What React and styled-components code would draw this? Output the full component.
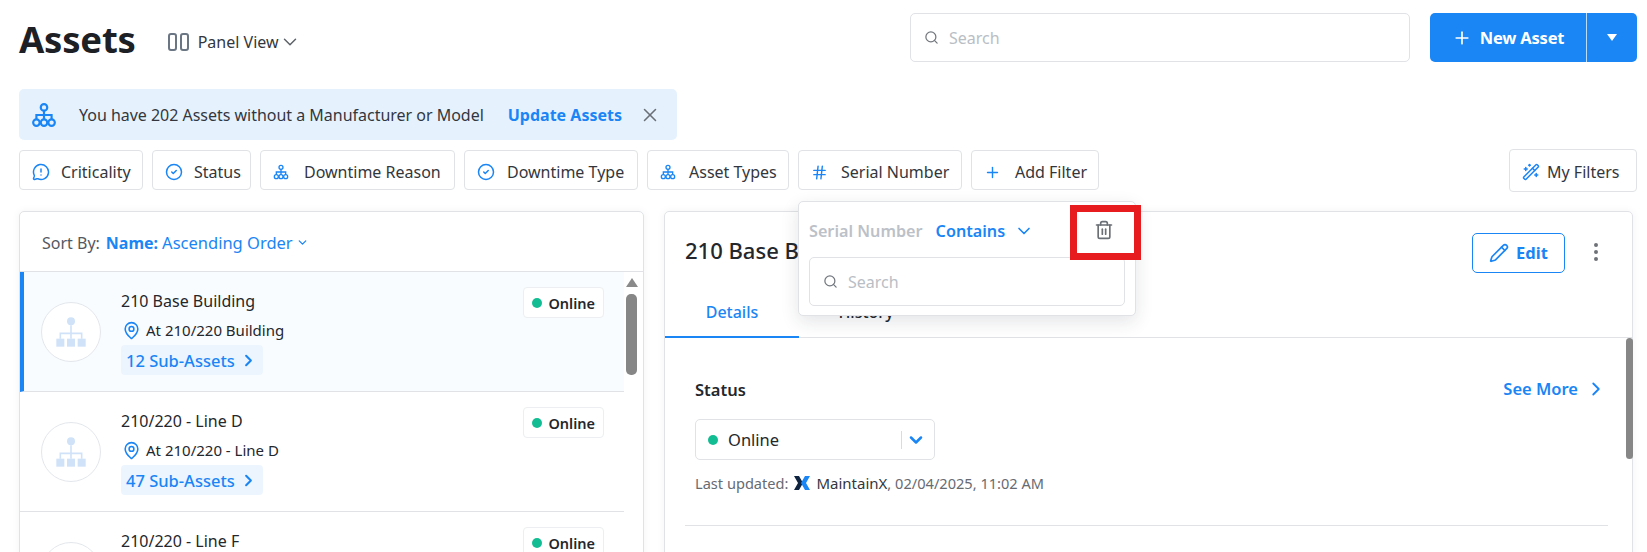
import * as React from 'react';
import styled, { createGlobalStyle } from 'styled-components';
import {
  ChevronDown,
  ChevronRight,
  Hash,
  MapPin,
  MessageCircleWarning,
  MoreVertical,
  Pencil,
  Plus,
  Search,
  Trash2,
  WandSparkles,
  X,
  CircleCheck,
} from 'lucide-react';

const BLUE = '#1a85f5';
const TEXT = '#24272c';
const LINE = '#e0e2e5';

const GlobalStyle = createGlobalStyle`
  html, body {
    margin: 0;
    background: #fff;
    overflow: hidden;
  }
  body {
    font-family: "Noto Sans", "Open Sans", "Liberation Sans", sans-serif;
    color: ${TEXT};
  }
  * { box-sizing: border-box; }
`;

const Page = styled.div`
  position: relative;
  height: 552px;
  overflow: hidden;
  padding: 13px 10px 0 19px;
`;

const Header = styled.header`
  display: flex;
  align-items: center;
  height: 49px;
`;

const Title = styled.h1`
  margin: 3px 0 0;
  font-size: 36.5px;
  font-weight: 700;
  line-height: 49px;
  letter-spacing: -0.2px;
  color: #1d2025;
`;

const ViewSwitch = styled.div`
  display: flex;
  align-items: center;
  margin: 8px 0 0 32px;
  font-size: 16px;
  color: #33373d;
  svg:first-child { margin-right: 8px; }
`;

const TopSearch = styled.div`
  display: flex;
  align-items: center;
  gap: 10px;
  width: 500px;
  height: 49px;
  margin-left: auto;
  padding-left: 13px;
  border: 1px solid ${LINE};
  border-radius: 5px;
  font-size: 16px;
  color: #b9bec5;
  svg { color: #72777e; }
`;

const SplitButton = styled.div`
  display: flex;
  width: 207px;
  height: 49px;
  margin-left: 20px;
  border-radius: 5px;
  background: ${BLUE};
  color: #fff;
  font-size: 16.5px;
  font-weight: 700;
  letter-spacing: -0.2px;
`;

const SplitMain = styled.div`
  flex: none;
  width: 157px;
  display: flex;
  align-items: center;
  justify-content: center;
  gap: 8px;
  border-right: 1px solid #bcdcfb;
`;

const SplitCaret = styled.div`
  flex: 1;
  display: flex;
  align-items: center;
  justify-content: center;
  &::after {
    content: '';
    border: 5px solid transparent;
    border-top: 7px solid #fff;
    border-bottom: 0;
  }
`;

const Banner = styled.div`
  display: flex;
  align-items: center;
  width: 658px;
  height: 51px;
  margin-top: 27px;
  padding-left: 12px;
  border-radius: 5px;
  background: #e5f2fe;
  font-size: 16px;
  color: #33373d;
`;

const BannerText = styled.span`
  margin-left: 22px;
  letter-spacing: -0.02px;
`;

const BannerLink = styled.span`
  margin-left: 24px;
  font-weight: 700;
  color: ${BLUE};
`;

const BannerClose = styled.span`
  display: flex;
  margin-left: 17px;
  color: #6b7077;
`;

const FilterRow = styled.div`
  display: flex;
  align-items: center;
  gap: 9px;
  height: 40px;
  margin-top: 10px;
`;

const Chip = styled.div`
  display: flex;
  align-items: center;
  gap: ${(p) => p.$gap || 12}px;
  height: ${(p) => (p.$tall ? 43 : 40)}px;
  width: ${(p) => p.$width}px;
  padding: 4px 0 0 12px;
  margin-left: ${(p) => (p.$push ? 'auto' : '0')};
  border: 1px solid ${LINE};
  border-radius: 4px;
  background: #fff;
  font-size: 16px;
  color: #33373d;
  white-space: nowrap;
  svg { color: ${BLUE}; flex: none; }
`;

const Panels = styled.div`
  display: flex;
  gap: 20px;
  margin-top: 21px;
  margin-right: 4px;
`;

const ListPanel = styled.section`
  width: 625px;
  height: 400px;
  border: 1px solid ${LINE};
  border-radius: 5px 5px 0 0;
  box-shadow: 0 0 8px rgba(30, 40, 60, 0.05);
`;

const SortBar = styled.div`
  display: flex;
  align-items: center;
  height: 60px;
  padding: 2px 0 0 22px;
  border-bottom: 1px solid ${LINE};
  font-size: 16px;
  color: #55595f;
`;

const SortName = styled.b`
  margin-left: 6px;
  color: ${BLUE};
  font-weight: 700;
`;

const SortOrder = styled.span`
  margin-left: 4px;
  color: ${BLUE};
  font-size: 16.5px;
  display: flex;
  align-items: center;
  gap: 3px;
`;

const ListBody = styled.div`
  display: flex;
`;

const Rows = styled.div`
  width: 605px;
`;

const Row = styled.div`
  display: flex;
  height: 120px;
  padding: 21px 20px 0 ${(p) => (p.$active ? 17 : 21)}px;
  border-bottom: 1px solid ${LINE};
  border-left: ${(p) => (p.$active ? `4px solid ${BLUE}` : '0')};
  background: ${(p) => (p.$active ? '#f9fcff' : '#fff')};
`;

const AssetThumb = styled.div`
  flex: none;
  display: flex;
  align-items: center;
  justify-content: center;
  width: 60px;
  height: 60px;
  margin-top: 9px;
  border: 1px solid #e3e7ec;
  border-radius: 50%;
  background: #fff;
`;

const RowInfo = styled.div`
  flex: 1;
  margin-left: 20px;
`;

const AssetName = styled.div`
  font-size: 16px;
  line-height: 22px;
  margin-top: -3px;
`;

const AssetPlace = styled.div`
  display: flex;
  align-items: center;
  gap: 5px;
  margin-top: 8px;
  padding-left: 1px;
  font-size: 15px;
  line-height: 20px;
  svg { color: ${BLUE}; }
`;

const SubAssets = styled.div`
  display: inline-flex;
  align-items: center;
  gap: 4px;
  height: 30px;
  margin-top: 5px;
  padding: 0 5px;
  border-radius: 4px;
  background: #ecf5fe;
  color: ${BLUE};
  font-size: 16.5px;
  font-weight: 500;
`;

const StatusBadge = styled.div`
  display: flex;
  align-items: center;
  gap: 6px;
  height: 31px;
  margin-top: -6px;
  padding: 0 8px;
  border: 1px solid #eceef1;
  border-radius: 4px;
  background: #fff;
  font-size: 14.5px;
  font-weight: 600;
`;

const Dot = styled.span`
  flex: none;
  width: 10px;
  height: 10px;
  border-radius: 50%;
  background: #13bd93;
`;

const ListScroll = styled.div`
  flex: none;
  width: 18px;
  padding-top: 6px;
  margin-left: 1px;
`;

const ScrollUp = styled.div`
  width: 0;
  margin-left: 1px;
  border: 6px solid transparent;
  border-top: 0;
  border-bottom: 9px solid #8a8a8a;
`;

const ScrollThumb = styled.div`
  width: 11px;
  height: 81px;
  margin: 7px 0 0 1px;
  border-radius: 5px;
  background: #868686;
`;

const DetailPanel = styled.section`
  position: relative;
  flex: 1;
  height: 400px;
  border: 1px solid ${LINE};
  border-radius: 5px 5px 0 0;
  box-shadow: 0 0 8px rgba(30, 40, 60, 0.05);
`;

const DetailHead = styled.div`
  display: flex;
  align-items: center;
  height: 80px;
  padding: 0 24px 0 20px;
`;

const DetailTitle = styled.h2`
  margin: -4px auto 0 0;
  font-size: 22px;
  font-weight: 500;
`;

const EditButton = styled.div`
  display: flex;
  align-items: center;
  justify-content: center;
  gap: 7px;
  width: 93px;
  height: 40px;
  border: 1px solid ${BLUE};
  border-radius: 5px;
  color: ${BLUE};
  font-size: 16.5px;
  font-weight: 700;
  margin-top: 1px;
`;

const MoreButton = styled.div`
  display: flex;
  margin-left: 19px;
  color: #6e7278;
`;

const Tabs = styled.div`
  display: flex;
  height: 46px;
  border-bottom: 1px solid ${LINE};
`;

const Tab = styled.div`
  display: flex;
  align-items: center;
  justify-content: center;
  width: 134px;
  height: 46px;
  padding-bottom: 4px;
  font-size: 16px;
  font-weight: 500;
  color: ${(p) => (p.$active ? BLUE : TEXT)};
  border-bottom: 2px solid ${(p) => (p.$active ? BLUE : 'transparent')};
`;

const DetailBody = styled.div`
  position: relative;
  padding: 0 24px 0 20px;
`;

const Section = styled.div`
  height: 188px;
  padding: 36px 0 0 10px;
  border-bottom: 1px solid ${LINE};
`;

const SectionHead = styled.div`
  display: flex;
  align-items: center;
  justify-content: space-between;
  height: 30px;
  padding-right: 1px;
`;

const SectionTitle = styled.div`
  font-size: 16.5px;
  font-weight: 600;
`;

const SeeMore = styled.div`
  display: flex;
  align-items: center;
  gap: 7px;
  margin-top: -1px;
  font-size: 16.5px;
  font-weight: 600;
  color: ${BLUE};
`;

const StatusSelect = styled.div`
  display: flex;
  align-items: center;
  gap: 10px;
  width: 240px;
  height: 41px;
  margin-top: 15px;
  padding-left: 12px;
  border: 1px solid ${LINE};
  border-radius: 5px;
  font-size: 16.5px;
`;

const SelectArrow = styled.div`
  display: flex;
  align-items: center;
  margin-left: auto;
  height: 18px;
  padding: 0 8px 0 4px;
  border-left: 1px solid #d8dbdf;
  color: ${BLUE};
`;

const UpdatedLine = styled.div`
  display: flex;
  align-items: center;
  gap: 6px;
  margin-top: 13px;
  font-size: 14.6px;
  color: #666b72;
`;

const UpdatedBy = styled.span`
  color: #33373d;
  font-size: 15px;
  margin-right: -6px;
`;

const UpdatedLogo = styled.span`
  display: flex;
`;

const DetailScroll = styled.div`
  position: absolute;
  top: 126px;
  right: -1px;
  width: 7px;
  height: 121px;
  border-radius: 4px;
  background: #868686;
`;

const Popover = styled.div`
  position: absolute;
  left: 798px;
  top: 201px;
  width: 338px;
  height: 115px;
  padding: 0 10px;
  border: 1px solid ${LINE};
  border-radius: 5px;
  background: #fff;
  box-shadow: 0 6px 18px rgba(30, 40, 60, 0.12);
`;

const PopoverHead = styled.div`
  display: flex;
  align-items: center;
  height: 55px;
  padding-top: 2px;
  font-size: 16.2px;
  font-weight: 600;
`;

const PopoverLabel = styled.span`
  color: #bcc1c8;
`;

const PopoverMode = styled.span`
  display: flex;
  align-items: center;
  gap: 9px;
  margin-left: 13px;
  color: ${BLUE};
`;

const PopoverTrash = styled.span`
  display: flex;
  margin-left: auto;
  margin-right: 11px;
  margin-top: -2px;
  color: #6b7077;
`;

const PopoverSearch = styled.div`
  display: flex;
  align-items: center;
  gap: 10px;
  width: 316px;
  height: 49px;
  padding-left: 13px;
  border: 1px solid ${LINE};
  border-radius: 5px;
  font-size: 16px;
  color: #b9bec5;
  svg { color: #72777e; }
`;

const Highlight = styled.div`
  position: absolute;
  left: 1070px;
  top: 205px;
  width: 71px;
  height: 55px;
  border: 7px solid #e71c1f;
`;

const HierarchyIcon = ({ size = 24, color = BLUE, solid = false }) => (
  <svg width={size} height={size} viewBox="0 0 24 24" fill="none" stroke={color} strokeWidth="2">
    {solid ? (
      <>
        <circle cx="12" cy="4" r="3" fill={color} stroke="none" />
        <path d="M12 7v6M4 17v-4h16v4M12 13v4" strokeWidth="1.2" />
        <rect x="1" y="17" width="6" height="6" fill={color} stroke="none" />
        <rect x="9" y="17" width="6" height="6" fill={color} stroke="none" />
        <rect x="17" y="17" width="6" height="6" fill={color} stroke="none" />
      </>
    ) : (
      <>
        <circle cx="12" cy="5" r="3" />
        <path d="M12 8v4M5 16v-4h14v4M12 12v4" />
        <circle cx="5" cy="19" r="3" />
        <circle cx="12" cy="19" r="3" />
        <circle cx="19" cy="19" r="3" />
      </>
    )}
  </svg>
);

const PanelIcon = () => (
  <svg width="22" height="18" viewBox="0 0 22 18" fill="none" stroke="#6b7684" strokeWidth="2">
    <rect x="1" y="1" width="7" height="16" rx="2" />
    <rect x="13" y="1" width="7" height="16" rx="2" />
  </svg>
);

const MaintainLogo = () => (
  <svg width="16" height="14" viewBox="0 0 16 14">
    <path d="M0 0h5l4 7-4 7H0l4-7z" fill="#0d2340" />
    <path d="M11 0h5l-4 7 4 7h-5L7 7z" fill="#1a85f5" />
  </svg>
);

const assets = [
  { name: '210 Base Building', place: 'At 210/220 Building', subs: '12 Sub-Assets', active: true },
  { name: '210/220 - Line D', place: 'At 210/220 - Line D', subs: '47 Sub-Assets' },
  { name: '210/220 - Line F' },
];

const filters = [
  { label: 'Criticality', width: 124, gap: 11, icon: <MessageCircleWarning size={18} /> },
  { label: 'Status', width: 99, gap: 11, icon: <CircleCheck size={18} /> },
  { label: 'Downtime Reason', width: 195, gap: 15, icon: <HierarchyIcon size={16} /> },
  { label: 'Downtime Type', width: 174, gap: 12, icon: <CircleCheck size={18} /> },
  { label: 'Asset Types', width: 142, gap: 13, icon: <HierarchyIcon size={16} /> },
  { label: 'Serial Number', width: 164, gap: 13, icon: <Hash size={17} /> },
  { label: 'Add Filter', width: 128, gap: 14, icon: <Plus size={17} /> },
];

export default function App() {
  return (
    <Page>
      <GlobalStyle />
      <Header>
        <Title>Assets</Title>
        <ViewSwitch>
          <PanelIcon />
          Panel View
          <ChevronDown size={22} strokeWidth={1.6} color="#5d6269" />
        </ViewSwitch>
        <TopSearch>
          <Search size={15} />
          Search
        </TopSearch>
        <SplitButton>
          <SplitMain>
            <Plus size={20} />
            New Asset
          </SplitMain>
          <SplitCaret />
        </SplitButton>
      </Header>

      <Banner>
        <HierarchyIcon size={26} />
        <BannerText>You have 202 Assets without a Manufacturer or Model</BannerText>
        <BannerLink>Update Assets</BannerLink>
        <BannerClose>
          <X size={22} strokeWidth={1.7} />
        </BannerClose>
      </Banner>

      <FilterRow>
        {filters.map((f) => (
          <Chip key={f.label} $width={f.width} $gap={f.gap}>
            {f.icon}
            {f.label}
          </Chip>
        ))}
        <Chip $push $tall $width={128} $gap={7}>
          <WandSparkles size={18} />
          My Filters
        </Chip>
      </FilterRow>

      <Panels>
        <ListPanel>
          <SortBar>
            Sort By:
            <SortName>Name:</SortName>
            <SortOrder>
              Ascending Order
              <ChevronDown size={13} strokeWidth={2.4} />
            </SortOrder>
          </SortBar>
          <ListBody>
            <Rows>
              {assets.map((a) => (
                <Row key={a.name} $active={a.active}>
                  <AssetThumb>
                    <HierarchyIcon size={32} color="#cfe2f8" solid />
                  </AssetThumb>
                  <RowInfo>
                    <AssetName>{a.name}</AssetName>
                    {a.place && (
                      <AssetPlace>
                        <MapPin size={19} />
                        {a.place}
                      </AssetPlace>
                    )}
                    {a.subs && (
                      <SubAssets>
                        {a.subs}
                        <ChevronRight size={19} strokeWidth={2.6} />
                      </SubAssets>
                    )}
                  </RowInfo>
                  <StatusBadge>
                    <Dot />
                    Online
                  </StatusBadge>
                </Row>
              ))}
            </Rows>
            <ListScroll>
              <ScrollUp />
              <ScrollThumb />
            </ListScroll>
          </ListBody>
        </ListPanel>

        <DetailPanel>
          <DetailHead>
            <DetailTitle>210 Base Building</DetailTitle>
            <EditButton>
              <Pencil size={20} />
              Edit
            </EditButton>
            <MoreButton>
              <MoreVertical size={24} />
            </MoreButton>
          </DetailHead>
          <Tabs>
            <Tab $active>Details</Tab>
            <Tab>History</Tab>
          </Tabs>
          <DetailBody>
            <Section>
              <SectionHead>
                <SectionTitle>Status</SectionTitle>
                <SeeMore>
                  See More
                  <ChevronRight size={22} strokeWidth={2} />
                </SeeMore>
              </SectionHead>
              <StatusSelect>
                <Dot />
                Online
                <SelectArrow>
                  <ChevronDown size={20} strokeWidth={3} />
                </SelectArrow>
              </StatusSelect>
              <UpdatedLine>
                Last updated:
                <UpdatedLogo>
                  <MaintainLogo />
                </UpdatedLogo>
                <UpdatedBy>MaintainX</UpdatedBy>, 02/04/2025, 11:02 AM
              </UpdatedLine>
            </Section>
          </DetailBody>
          <DetailScroll />
        </DetailPanel>
      </Panels>

      <Popover>
        <PopoverHead>
          <PopoverLabel>Serial Number</PopoverLabel>
          <PopoverMode>
            Contains
            <ChevronDown size={20} strokeWidth={2} />
          </PopoverMode>
          <PopoverTrash>
            <Trash2 size={20} />
          </PopoverTrash>
        </PopoverHead>
        <PopoverSearch>
          <Search size={15} />
          Search
        </PopoverSearch>
      </Popover>
      <Highlight />
    </Page>
  );
}
